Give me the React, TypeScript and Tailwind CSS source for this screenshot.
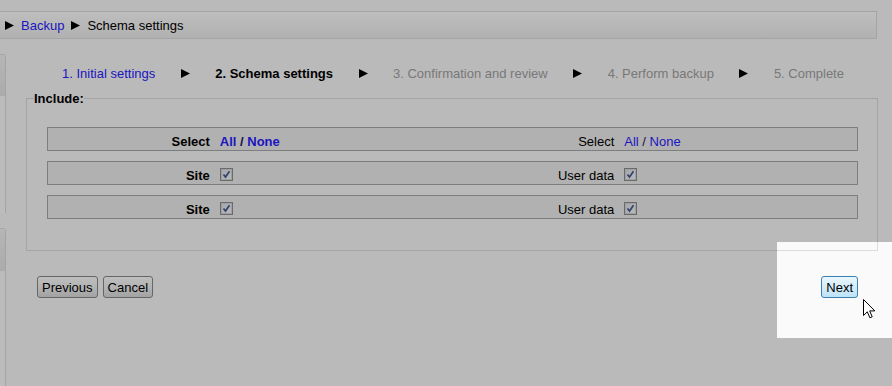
import React from 'react'

function Arrow({ className = '' }: { className?: string }) {
  return (
    <svg width="9" height="9" viewBox="0 0 9 9" className={className}>
      <polygon points="0,0 9,4.5 0,9" fill="#000" />
    </svg>
  )
}

function Checkbox() {
  return (
    <span className="mt-[2px] flex h-[13px] w-[13px] items-center justify-center border border-[#8e8f8f] bg-[#f4f4f4]">
      <span className="flex h-[11px] w-[11px] items-center justify-center border border-[#d6d6d6] bg-gradient-to-br from-[#dfe1ea] to-[#f8f9fd]">
        <svg width="9" height="9" viewBox="0 0 9 9">
          <path d="M1.5 4.5 L3.5 7 L7.5 1.2" fill="none" stroke="#46598f" strokeWidth="1.7" />
        </svg>
      </span>
    </span>
  )
}

function Cell({ label, bold, children }: { label: string; bold?: boolean; children: React.ReactNode }) {
  return (
    <div className="flex items-center">
      <span className={bold ? 'w-[40%] pt-[4px] text-right font-bold' : 'w-[40%] pt-[4px] text-right'}>{label}</span>
      <div className="ml-[10px] flex items-center">{children}</div>
    </div>
  )
}

function AllNone({ bold }: { bold?: boolean }) {
  return (
    <span className={bold ? 'pt-[4px] font-bold' : 'pt-[4px]'}>
      <span className="text-[#2a1cff]">All</span>
      <span className="text-[#1a1466]"> / </span>
      <span className="text-[#2a1cff]">None</span>
    </span>
  )
}

export default function App() {
  const steps = [
    { label: '1. Initial settings', cls: 'text-[#2a1cff]' },
    { label: '2. Schema settings', cls: 'font-bold text-black' },
    { label: '3. Confirmation and review', cls: 'text-[#a2a2a2]' },
    { label: '4. Perform backup', cls: 'text-[#a2a2a2]' },
    { label: '5. Complete', cls: 'text-[#a2a2a2]' },
  ]

  return (
    <div className="relative h-[386px] w-[892px] overflow-hidden bg-[#fafafa] font-['Liberation_Sans',Arial,sans-serif] text-[13px] leading-[15px] text-black">
      {/* Breadcrumb */}
      <div className="pt-[11px]">
        <div className="flex h-[28px] w-[877px] items-center gap-[7px] border border-l-0 border-[#dcdcdc] bg-gradient-to-b from-white to-[#eeeeee] pl-[5px]">
          <Arrow />
          <span className="text-[#2a1cff]">Backup</span>
          <Arrow />
          <span>Schema settings</span>
        </div>
      </div>

      <div className="flex">
        {/* Side blocks peeking in */}
        <div className="w-[6px] pt-[15px]">
          <div className="h-[159px] rounded-tr-[3px] border-t border-r border-[#dcdcdc] bg-[#fdfdfd]">
            <div className="h-[41px] bg-gradient-to-b from-[#f4f4f4] to-[#e6e6e6]" />
          </div>
          <div className="mt-[15px] h-[200px] rounded-tr-[3px] border-t border-r border-[#dcdcdc] bg-[#fdfdfd]">
            <div className="h-[42px] bg-gradient-to-b from-[#f4f4f4] to-[#e6e6e6]" />
          </div>
        </div>

        {/* Main region */}
        <div className="flex-1 pl-[20px] pr-[14px]">
          <div className="mt-[27px] flex items-center justify-center gap-[25.5px] pl-[2px]">
            {steps.map((s, i) => (
              <React.Fragment key={s.label}>
                {i > 0 && <Arrow />}
                <span className={s.cls}>{s.label}</span>
              </React.Fragment>
            ))}
          </div>

          <fieldset className="mt-[10px] border border-[#dcdcdc] px-[7px] pb-[31px]">
            <legend className="font-bold">Include:</legend>
            <div className="mt-[21px] flex flex-col gap-[10px] pl-[13px] pr-[12px]">
              <div className="grid h-[24px] grid-cols-2 border border-[#aaaaaa] bg-[#eeeeee]">
                <Cell label="Select" bold>
                  <AllNone bold />
                </Cell>
                <Cell label="Select">
                  <AllNone />
                </Cell>
              </div>
              {[0, 1].map((r) => (
                <div key={r} className="grid h-[24px] grid-cols-2 border border-[#aaaaaa] bg-[#eeeeee]">
                  <Cell label="Site" bold>
                    <Checkbox />
                  </Cell>
                  <Cell label="User data">
                    <Checkbox />
                  </Cell>
                </div>
              ))}
            </div>
          </fieldset>

          <div className="mt-[25px] flex items-center pl-[11px] pr-[20px]">
            <button className="flex h-[22px] items-center rounded-[3px] border border-[#8a8a8a] bg-gradient-to-b from-white via-[#f1f1f1] to-[#dadada] px-[4px]">
              Previous
            </button>
            <button className="ml-[5px] flex h-[22px] items-center rounded-[3px] border border-[#8a8a8a] bg-gradient-to-b from-white via-[#f1f1f1] to-[#dadada] px-[4px]">
              Cancel
            </button>
            <button className="ml-auto flex h-[22px] items-center rounded-[3px] border border-[#3c7fb1] bg-gradient-to-b from-[#eaf6fd] to-[#bde3f7] px-[4px]">
              Next
            </button>
          </div>
        </div>
      </div>

      {/* Tour spotlight over the Next button */}
      <div className="pointer-events-none absolute left-[777px] top-[242px] h-[96px] w-[115px] shadow-[0_0_0_1200px_rgba(0,0,0,0.255)]" />

      {/* Mouse pointer */}
      <svg className="absolute left-[863px] top-[299px]" width="13" height="20" viewBox="0 0 13 20">
        <path d="M0.5 0.5 L0.5 16.5 L4.3 12.8 L6.9 18.8 L9.2 17.8 L6.7 11.9 L11.8 11.9 Z" fill="#fff" stroke="#000" strokeWidth="1" strokeLinejoin="miter" />
      </svg>
    </div>
  )
}
